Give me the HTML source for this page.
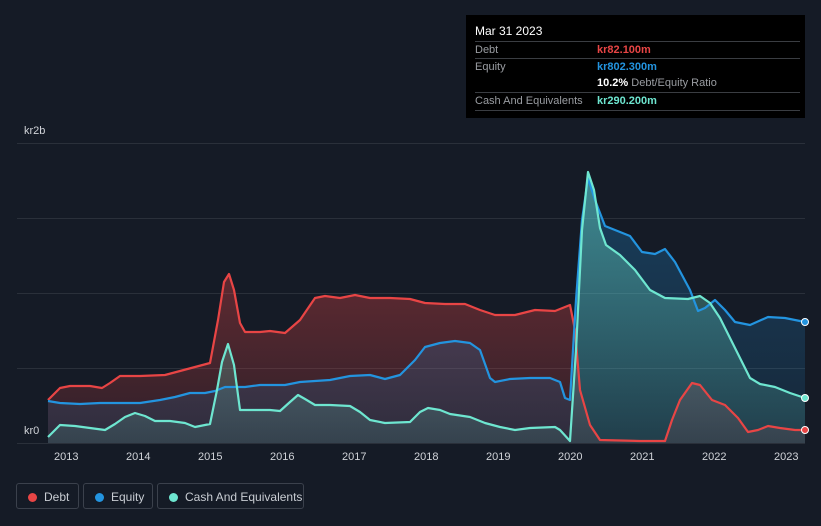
<!DOCTYPE html>
<html><head><meta charset="utf-8"><style>
body{margin:0;background:#151b26;width:821px;height:526px;overflow:hidden;font-family:"Liberation Sans",sans-serif;position:relative}
.tt{position:absolute;left:466px;top:15px;width:339px;height:103px;background:#000;color:#fff;font-size:11px}
.tt .h{position:absolute;left:9px;top:9px;font-size:12px}
.row{position:absolute;left:9px;width:325px;border-top:1px solid #3a3d42;height:17px;line-height:17px;color:#9a9da2}
.row span{position:absolute;left:122px}
.lab{position:absolute;color:#d0d3d8;font-size:11px}
.leg{position:absolute;top:483px;height:26px;border:1px solid #3b414c;border-radius:3px;color:#c8ccd2;font-size:12px;line-height:26px;box-sizing:border-box}
.leg i{position:absolute;left:11px;top:9px;width:9px;height:9px;border-radius:50%}
.leg b{font-weight:normal;position:absolute;left:27px}
</style></head><body>
<svg width="821" height="526" style="position:absolute;left:0;top:0">
<defs>
<linearGradient id="gd" x1="0" y1="0" x2="0" y2="1"><stop offset="0" stop-color="#e84545" stop-opacity=".35"/><stop offset="1" stop-color="#e84545" stop-opacity=".12"/></linearGradient>
<linearGradient id="ge" x1="0" y1="0" x2="0" y2="1"><stop offset="0" stop-color="#2394df" stop-opacity=".3"/><stop offset="1" stop-color="#2394df" stop-opacity=".1"/></linearGradient>
<linearGradient id="gc" x1="0" y1="0" x2="0" y2="1"><stop offset="0" stop-color="#6ee6d0" stop-opacity=".45"/><stop offset="1" stop-color="#6ee6d0" stop-opacity=".12"/></linearGradient>
</defs>
<g stroke="#2a303a" stroke-width="1">
<line x1="17" y1="143.5" x2="805" y2="143.5"/><line x1="17" y1="218.5" x2="805" y2="218.5"/><line x1="17" y1="293.5" x2="805" y2="293.5"/><line x1="17" y1="368.5" x2="805" y2="368.5"/><line x1="17" y1="443.5" x2="805" y2="443.5"/>
</g>
<path id="d" fill="url(#gd)" d="M48,400 L60,388 70,386 90,386 102,388 110,383 120,376 140,376 165,375 180,371 195,367 210,363 218,320 224,282 229,274 234,290 240,323 245,332 260,332 270,331 285,333 300,320 315,298 325,296 340,298 355,295 370,298 390,298 410,299 425,303 445,304 465,304 480,310 495,315 515,315 535,310 555,311 570,305 575,330 580,390 590,425 600,440 640,441 665,441 672,420 680,400 692,383 700,385 712,400 725,405 738,418 748,432 758,430 768,426 780,428 795,430 805,430 L805,443 48,443Z"/>
<path fill="url(#ge)" d="M48,401 L60,403 80,404 100,403 140,403 160,400 175,397 190,393 205,393 215,391 225,387 245,387 260,385 285,385 300,382 330,380 350,376 370,375 385,379 400,375 415,360 425,347 440,343 455,341 470,343 480,350 490,378 495,382 510,379 530,378 550,378 560,382 565,398 570,400 576,300 582,220 588,178 595,200 605,226 620,232 630,236 642,252 655,254 665,249 675,262 690,290 698,311 705,308 715,300 725,310 735,322 750,325 768,317 785,318 805,322 L805,443 48,443Z"/>
<path fill="url(#gc)" d="M48,437 L60,425 75,426 90,428 105,430 115,424 125,417 135,413 145,416 155,421 170,421 185,423 195,427 210,424 217,390 222,362 228,344 234,365 240,410 250,410 270,410 280,411 290,402 298,395 305,399 315,405 330,405 350,406 360,412 370,420 385,423 410,422 420,412 428,408 440,410 450,414 470,417 485,423 500,427 515,430 530,428 555,427 560,430 570,441 576,350 582,230 588,172 594,190 600,228 606,245 620,255 635,270 650,290 665,298 688,299 700,296 710,303 720,318 735,348 750,378 760,384 775,387 790,393 805,398 L805,443 48,443Z"/>
<g fill="none" stroke-width="2.2" stroke-linejoin="round">
<path stroke="#e84545" d="M48,400 L60,388 70,386 90,386 102,388 110,383 120,376 140,376 165,375 180,371 195,367 210,363 218,320 224,282 229,274 234,290 240,323 245,332 260,332 270,331 285,333 300,320 315,298 325,296 340,298 355,295 370,298 390,298 410,299 425,303 445,304 465,304 480,310 495,315 515,315 535,310 555,311 570,305 575,330 580,390 590,425 600,440 640,441 665,441 672,420 680,400 692,383 700,385 712,400 725,405 738,418 748,432 758,430 768,426 780,428 795,430 805,430"/>
<path stroke="#2394df" d="M48,401 L60,403 80,404 100,403 140,403 160,400 175,397 190,393 205,393 215,391 225,387 245,387 260,385 285,385 300,382 330,380 350,376 370,375 385,379 400,375 415,360 425,347 440,343 455,341 470,343 480,350 490,378 495,382 510,379 530,378 550,378 560,382 565,398 570,400 576,300 582,220 588,178 595,200 605,226 620,232 630,236 642,252 655,254 665,249 675,262 690,290 698,311 705,308 715,300 725,310 735,322 750,325 768,317 785,318 805,322"/>
<path stroke="#6ee6d0" d="M48,437 L60,425 75,426 90,428 105,430 115,424 125,417 135,413 145,416 155,421 170,421 185,423 195,427 210,424 217,390 222,362 228,344 234,365 240,410 250,410 270,410 280,411 290,402 298,395 305,399 315,405 330,405 350,406 360,412 370,420 385,423 410,422 420,412 428,408 440,410 450,414 470,417 485,423 500,427 515,430 530,428 555,427 560,430 570,441 576,350 582,230 588,172 594,190 600,228 606,245 620,255 635,270 650,290 665,298 688,299 700,296 710,303 720,318 735,348 750,378 760,384 775,387 790,393 805,398"/>
</g>
<circle cx="805" cy="322" r="3.5" fill="#2394df" stroke="#fff" stroke-width="1"/>
<circle cx="805" cy="398" r="3.5" fill="#6ee6d0" stroke="#fff" stroke-width="1"/>
<circle cx="805" cy="430" r="3.5" fill="#e84545" stroke="#fff" stroke-width="1"/>
</svg>
<div class="lab" style="left:24px;top:125px">kr2b</div>
<div class="lab" style="left:24px;top:425px">kr0</div>
<div class="lab" style="left:54px;top:451px">2013</div><div class="lab" style="left:126px;top:451px">2014</div><div class="lab" style="left:198px;top:451px">2015</div><div class="lab" style="left:270px;top:451px">2016</div><div class="lab" style="left:342px;top:451px">2017</div><div class="lab" style="left:414px;top:451px">2018</div><div class="lab" style="left:486px;top:451px">2019</div><div class="lab" style="left:558px;top:451px">2020</div><div class="lab" style="left:630px;top:451px">2021</div><div class="lab" style="left:702px;top:451px">2022</div><div class="lab" style="left:774px;top:451px">2023</div>
<div class="tt"><div class="h">Mar 31 2023</div>
<div class="row" style="top:26px">Debt<span style="color:#e84545;font-weight:bold">kr82.100m</span></div>
<div class="row" style="top:43px">Equity<span style="color:#2394df;font-weight:bold">kr802.300m</span></div>
<div class="row" style="top:60px;border-top:none"><span><b style="color:#fff">10.2%</b> Debt/Equity Ratio</span></div>
<div class="row" style="top:77px">Cash And Equivalents<span style="color:#6ee6d0;font-weight:bold">kr290.200m</span></div>
<div class="row" style="top:95px;height:0"></div>
</div>
<div class="leg" style="left:16px;width:63px"><i style="background:#e84545"></i><b>Debt</b></div>
<div class="leg" style="left:83px;width:70px"><i style="background:#2394df"></i><b>Equity</b></div>
<div class="leg" style="left:157px;width:147px"><i style="background:#6ee6d0"></i><b>Cash And Equivalents</b></div>
</body></html>
